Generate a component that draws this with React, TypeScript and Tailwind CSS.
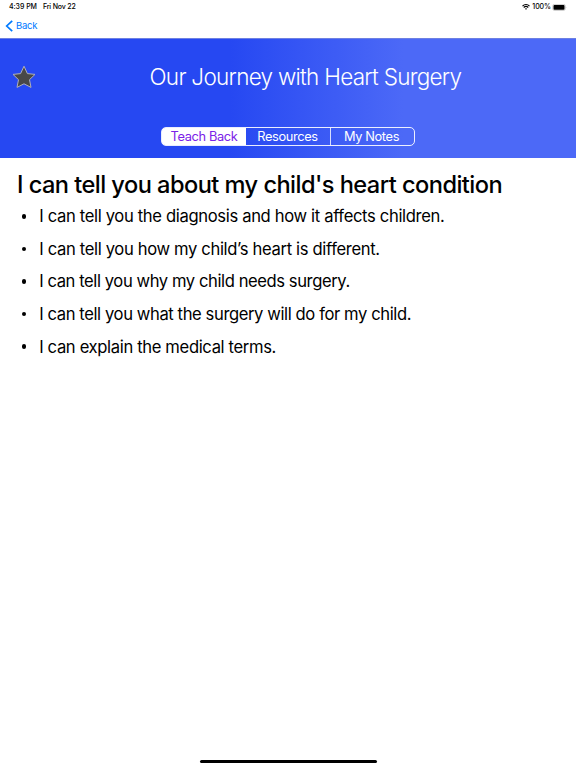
const items = [
  { text: "I can tell you the diagnosis and how it affects children.", tracking: "tracking-[-0.34px]" },
  { text: "I can tell you how my child’s heart is different.", tracking: "tracking-[-0.34px]" },
  { text: "I can tell you why my child needs surgery.", tracking: "tracking-[-0.42px]" },
  { text: "I can tell you what the surgery will do for my child.", tracking: "tracking-[-0.4px]" },
  { text: "I can explain the medical terms.", tracking: "tracking-[-0.35px]" },
];

function StatusBar() {
  return (
    <div className="flex h-[14px] items-center justify-between pl-[9px] pr-[9px] text-[7px] font-medium leading-[14px] tracking-[-0.05px] text-black">
      <div className="flex gap-[6px]">
        <span>4:39 PM</span>
        <span className="tracking-[-0.15px]">Fri Nov 22</span>
      </div>
      <div className="flex items-center">
        <svg width="8" height="6" viewBox="0 0 16 12" className="mr-[2px]">
          <path d="M1 4.2a10.2 10.2 0 0 1 14 0" fill="none" stroke="#000" strokeWidth="2.5" />
          <path d="M3.5 7a6.5 6.5 0 0 1 9 0" fill="none" stroke="#000" strokeWidth="2.3" />
          <path d="M5.8 9.3a3.3 3.3 0 0 1 4.4 0L8 11.6Z" fill="#000" />
        </svg>
        <span>100%</span>
        <svg width="15" height="7" viewBox="0 0 15 7" className="ml-[1px]">
          <rect x="0.8" y="0.4" width="12.4" height="6" rx="1.5" fill="#fff" stroke="#999" strokeWidth="0.5" />
          <rect x="1.5" y="1.1" width="11" height="4.6" rx="0.9" fill="#000" />
          <path d="M13.8 2.4q1 1 0 2z" fill="#999" />
        </svg>
      </div>
    </div>
  );
}

export default function App() {
  return (
    <div className="flex h-[768px] w-[576px] flex-col overflow-hidden bg-white font-['Inter','Liberation_Sans',sans-serif]">
      <StatusBar />
      <nav className="flex h-6 items-center pl-[5px] text-[#007aff]">
        <svg width="8" height="12" viewBox="0 0 8 12">
          <path d="M7.2 0.8 1.7 6 7.2 11.2" fill="none" stroke="currentColor" strokeWidth="1.7" />
        </svg>
        <span className="ml-[3px] text-[9.5px] leading-6 tracking-[-0.25px]">Back</span>
      </nav>
      <header className="flex h-[120px] flex-col border-t border-[#6d80e2] bg-[linear-gradient(90deg,#2648f2_40%,#4c69f7_70%)]">
        <div className="flex h-[76px] items-center pl-[11px]">
          <svg width="26" height="26" viewBox="0 0 26 26">
            <path
              d="M13 2.2 16.4 9.6 24 10.4 18.5 15.7 20 23.4 13 19.8 6 23.4 7.5 15.7 2 10.4 9.6 9.6Z"
              fill="#484848"
              stroke="#b0b0ba"
              strokeWidth="1"
              strokeLinejoin="round"
            />
          </svg>
          <h1 className="ml-[112.5px] whitespace-nowrap text-[22.5px] font-[350] leading-[28px] tracking-[-0.72px] text-white">
            Our Journey with Heart Surgery
          </h1>
        </div>
        <div className="ml-[161px] mt-[12px] flex h-[19px] w-[254px] rounded-[5px] border border-white/90 text-center text-[12.8px] leading-[17px] tracking-[-0.35px] text-white">
          <div className="w-[84px] rounded-l-[3px] bg-white text-[#7b22e8]">Teach Back</div>
          <div className="w-[85px] border-r border-white/80 pr-px">Resources</div>
          <div className="w-[83px] pr-[2px]">My Notes</div>
        </div>
      </header>
      <main className="flex flex-1 flex-col">
        <h2 className="ml-[17px] mt-[12px] whitespace-nowrap text-[23.6px] font-medium leading-[30px] tracking-[-0.54px] text-black">
          I can tell you about my child's heart condition
        </h2>
        <ul className="flex flex-col">
          {items.map((item) => (
            <li key={item.text} className="flex h-[32.6px] items-center pl-[21.8px] text-black">
              <span className="mr-[12.8px] size-[4.6px] rounded-full bg-black" />
              <span className={`whitespace-nowrap text-[16.6px] leading-[24px] ${item.tracking}`}>{item.text}</span>
            </li>
          ))}
        </ul>
      </main>
      <footer className="flex h-[8px] justify-center">
        <div className="h-[3px] w-[177px] rounded-full bg-black" />
      </footer>
    </div>
  );
}
